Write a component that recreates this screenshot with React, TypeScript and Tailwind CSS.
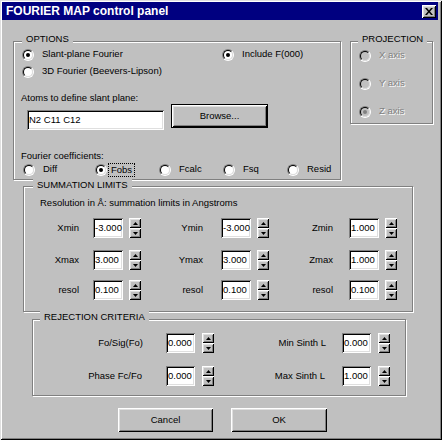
import type { ReactNode } from "react";

const raised =
  "shadow-[inset_1px_1px_0_#fff,inset_-1px_-1px_0_#000,inset_2px_2px_0_#dfdfdf,inset_-2px_-2px_0_#808080]";
const sunken =
  "shadow-[inset_1px_1px_0_#808080,inset_-1px_-1px_0_#fff,inset_2px_2px_0_#000,inset_-2px_-2px_0_#dfdfdf]";
const etched = "border border-[#808080] shadow-[inset_1px_1px_0_#fff,1px_1px_0_#fff]";

function Radio({ checked, disabled }: { checked?: boolean; disabled?: boolean }) {
  return (
    <span className="flex h-[12px] w-[12px] shrink-0 rounded-full border border-t-[#808080] border-l-[#808080] border-b-white border-r-white">
      <span
        className={`flex h-full w-full items-center justify-center rounded-full border border-t-black border-l-black border-b-[#dfdfdf] border-r-[#dfdfdf] ${
          disabled ? "bg-[#c0c0c0]" : "bg-white"
        }`}
      >
        {checked && <span className={`h-[4px] w-[4px] rounded-full ${disabled ? "bg-[#808080]" : "bg-black"}`} />}
      </span>
    </span>
  );
}

function Option({
  label,
  checked,
  disabled,
  focused,
  className = "",
}: {
  label: string;
  checked?: boolean;
  disabled?: boolean;
  focused?: boolean;
  className?: string;
}) {
  return (
    <div className={`flex h-[13px] items-center ${className}`}>
      <Radio checked={checked} disabled={disabled} />
      <span
        className={`whitespace-nowrap ${focused ? "ml-[1px] border border-dotted border-black px-[2px] leading-[12px]" : "ml-[8px]"} ${
          disabled ? "text-[#808080] [text-shadow:1px_1px_0_#fff]" : ""
        }`}
      >
        {label}
      </span>
    </div>
  );
}

function Group({ title, legend, className, children }: { title: string; legend: string; className: string; children: ReactNode }) {
  return (
    <div className={`relative ${etched} ${className}`}>
      <span className={`absolute bg-[#c0c0c0] px-[4px] leading-[13px] whitespace-nowrap ${legend}`}>{title}</span>
      {children}
    </div>
  );
}

function Field({ value, className }: { value: string; className: string }) {
  return (
    <div className={`flex h-[20px] items-center overflow-hidden bg-white pl-[2px] leading-none whitespace-nowrap ${sunken} ${className}`}>
      {value}
    </div>
  );
}

function Arrow({ up }: { up?: boolean }) {
  return (
    <div className={`flex h-[10px] w-[12px] items-center justify-center bg-[#c0c0c0] ${raised}`}>
      <svg width="5" height="3" viewBox="0 0 5 3">
        <path d={up ? "M2.5 0 L5 3 L0 3 Z" : "M0 0 L5 0 L2.5 3 Z"} fill="#000" />
      </svg>
    </div>
  );
}

function Spin() {
  return (
    <div className="flex h-[20px] w-[12px] shrink-0 flex-col">
      <Arrow up />
      <Arrow />
    </div>
  );
}

function SumCell({ label, value, labelW, gap }: { label: string; value: string; labelW: string; gap: string }) {
  return (
    <div className="flex w-[128px] items-center">
      <span className={`text-right ${labelW} ${gap}`}>{label}</span>
      <Field value={value} className="w-[30px]" />
      <div className="ml-[6px]">
        <Spin />
      </div>
    </div>
  );
}

function RejCell({ label, value, labelW, gap }: { label: string; value: string; labelW: string; gap: string }) {
  return (
    <div className="flex items-center">
      <span className={`text-right whitespace-nowrap ${labelW} ${gap}`}>{label}</span>
      <Field value={value} className="w-[29px]" />
      <div className="ml-[7px]">
        <Spin />
      </div>
    </div>
  );
}

const sumRows = [
  [
    ["Xmin", "-3.000"],
    ["Ymin", "-3.000"],
    ["Zmin", "1.000"],
  ],
  [
    ["Xmax", "3.000"],
    ["Ymax", "3.000"],
    ["Zmax", "1.000"],
  ],
  [
    ["resol", "0.100"],
    ["resol", "0.100"],
    ["resol", "0.100"],
  ],
];

export default function App() {
  return (
    <div className="h-[442px] w-[443px] bg-white text-[9.5px] text-black [font-family:'Liberation_Sans',Arial,sans-serif]">
      <div className="h-[440px] w-[442px] bg-[#c0c0c0] p-[2px] shadow-[inset_1px_1px_0_#dfdfdf,inset_-1px_-1px_0_#000,inset_2px_2px_0_#fff,inset_-2px_-2px_0_#808080]">
        {/* title bar */}
        <div className="flex h-[18px] w-[436px] items-center justify-between bg-[#000080] pr-[2px] pl-[4px]">
          <span className="text-[12px] leading-none font-bold text-white">FOURIER MAP control panel</span>
          <div className={`flex h-[13px] w-[14px] items-center justify-center bg-[#c0c0c0] ${raised}`}>
            <svg width="8" height="7" viewBox="0 0 8 7">
              <path d="M0 0h2l2 2.5L6 0h2L5 3.5 8 7H6L4 4.5 2 7H0l3-3.5z" fill="#000" />
            </svg>
          </div>
        </div>

        {/* options + projection */}
        <div className="mt-[21px] flex items-start gap-[9px] pl-[11px]">
          <Group title="OPTIONS" legend="left-[8px] top-[-10px]" className="h-[139px] w-[328px]">
            <div className="flex flex-col pt-[6px]">
              <div className="flex pl-[8px]">
                <Option label="Slant-plane Fourier" checked className="w-[200px]" />
                <Option label="Include F(000)" checked />
              </div>
              <Option label="3D Fourier (Beevers-Lipson)" className="mt-[4px] pl-[8px]" />
              <div className="mt-[13px] pl-[7px] leading-[13px]">Atoms to define slant plane:</div>
              <div className="flex items-start pl-[13px]">
                <Field value="N2 C11 C12" className="mt-[6px] w-[137px]" />
                <button className={`ml-[7px] flex h-[24px] w-[97px] items-center justify-center border border-black bg-[#c0c0c0] ${raised}`}>
                  Browse...
                </button>
              </div>
              <div className="mt-[19px] pl-[7px] leading-[13px]">Fourier coefficients:</div>
              <div className="mt-[1px] flex pl-[9px]">
                <Option label="Diff" className="w-[72px]" />
                <Option label="Fobs" checked focused className="w-[64px]" />
                <Option label="Fcalc" className="w-[64px]" />
                <Option label="Fsq" className="w-[64px]" />
                <Option label="Resid" />
              </div>
            </div>
          </Group>
          <Group title="PROJECTION" legend="left-[7px] top-[-10px]" className="h-[83px] w-[83px]">
            <div className="flex flex-col gap-[15px] pt-[7px] pl-[8px]">
              <Option label="X axis" disabled />
              <Option label="Y axis" disabled />
              <Option label="Z axis" checked disabled />
            </div>
          </Group>
        </div>

        {/* summation limits */}
        <Group title="SUMMATION LIMITS" legend="left-[9px] top-[-9px]" className="mt-[6px] ml-[21px] h-[126px] w-[390px]">
          <div className="pt-[9px] pl-[16px] leading-[13px]">Resolution in Å: summation limits in Angstroms</div>
          <div className="mt-[9px] flex flex-col">
            {sumRows.map((row, i) => (
              <div key={i} className={`flex ${i === 1 ? "mt-[12px]" : i === 2 ? "mt-[10px]" : ""}`}>
                <SumCell label={row[0][0]} value={row[0][1]} labelW="w-[55px]" gap="mr-[14px]" />
                <SumCell label={row[1][0]} value={row[1][1]} labelW="w-[51px]" gap="mr-[18px]" />
                <SumCell label={row[2][0]} value={row[2][1]} labelW="w-[53px]" gap="mr-[16px]" />
              </div>
            ))}
          </div>
        </Group>

        {/* rejection criteria */}
        <Group title="REJECTION CRITERIA" legend="left-[7px] top-[-10px]" className="mt-[7px] ml-[30px] h-[77px] w-[374px]">
          <div className="flex flex-col gap-[13px] pt-[13px]">
            <div className="flex">
              <RejCell label="Fo/Sig(Fo)" value="0.000" labelW="w-[110px]" gap="mr-[23px]" />
              <RejCell label="Min Sinth L" value="0.000" labelW="w-[112px]" gap="mr-[16px]" />
            </div>
            <div className="flex">
              <RejCell label="Phase Fc/Fo" value="0.000" labelW="w-[109px]" gap="mr-[24px]" />
              <RejCell label="Max Sinth L" value="1.000" labelW="w-[111px]" gap="mr-[17px]" />
            </div>
          </div>
        </Group>

        {/* buttons */}
        <div className="mt-[12px] flex gap-[18px] pl-[116px]">
          <button className={`flex h-[24px] w-[95px] items-center justify-center bg-[#c0c0c0] ${raised}`}>Cancel</button>
          <button className={`flex h-[24px] w-[96px] items-center justify-center bg-[#c0c0c0] ${raised}`}>OK</button>
        </div>
      </div>
    </div>
  );
}
